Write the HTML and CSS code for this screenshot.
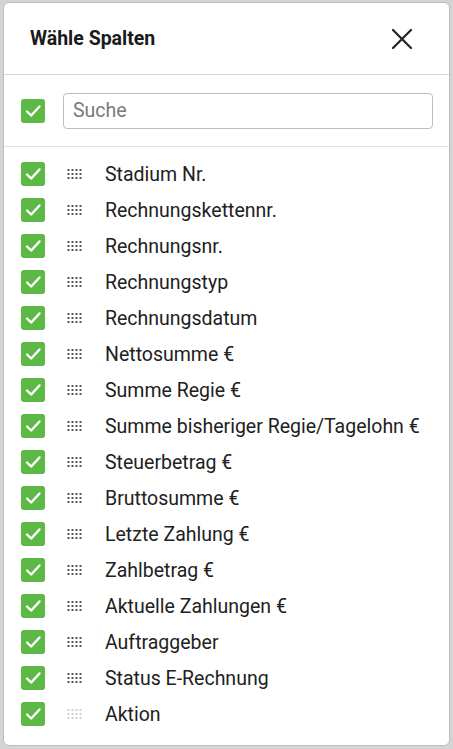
FILE: index.html
```html
<!DOCTYPE html>
<html lang="de">
<head>
<meta charset="utf-8">
<title>Wähle Spalten</title>
<link rel="stylesheet" href="styles.css">
</head>
<body>
<div class="modal">
  <div class="modal-header">
    <h2 class="modal-title">Wähle Spalten</h2>
    <button class="close-btn" aria-label="Schließen">
      <svg width="22" height="22" viewBox="0 0 22 22"><path d="M2 2 L20 20 M20 2 L2 20" stroke="#222" stroke-width="2.2" stroke-linecap="round" fill="none"/></svg>
    </button>
  </div>
  <div class="search-row">
    <span class="cb"><svg viewBox="0 0 24 24"><path d="M6 12.5 L10.2 16.5 L18.5 7.5" stroke="#fff" stroke-width="2.4" fill="none" stroke-linecap="round" stroke-linejoin="round"/></svg></span>
    <input class="search" type="text" placeholder="Suche">
  </div>
  <ul class="col-list">
    <li class="col-item"><span class="cb"><svg viewBox="0 0 24 24"><path d="M6 12.5 L10.2 16.5 L18.5 7.5" stroke="#fff" stroke-width="2.4" fill="none" stroke-linecap="round" stroke-linejoin="round"/></svg></span><span class="handle"></span><span class="label">Stadium Nr.</span></li>
    <li class="col-item"><span class="cb"><svg viewBox="0 0 24 24"><path d="M6 12.5 L10.2 16.5 L18.5 7.5" stroke="#fff" stroke-width="2.4" fill="none" stroke-linecap="round" stroke-linejoin="round"/></svg></span><span class="handle"></span><span class="label">Rechnungskettennr.</span></li>
    <li class="col-item"><span class="cb"><svg viewBox="0 0 24 24"><path d="M6 12.5 L10.2 16.5 L18.5 7.5" stroke="#fff" stroke-width="2.4" fill="none" stroke-linecap="round" stroke-linejoin="round"/></svg></span><span class="handle"></span><span class="label">Rechnungsnr.</span></li>
    <li class="col-item"><span class="cb"><svg viewBox="0 0 24 24"><path d="M6 12.5 L10.2 16.5 L18.5 7.5" stroke="#fff" stroke-width="2.4" fill="none" stroke-linecap="round" stroke-linejoin="round"/></svg></span><span class="handle"></span><span class="label">Rechnungstyp</span></li>
    <li class="col-item"><span class="cb"><svg viewBox="0 0 24 24"><path d="M6 12.5 L10.2 16.5 L18.5 7.5" stroke="#fff" stroke-width="2.4" fill="none" stroke-linecap="round" stroke-linejoin="round"/></svg></span><span class="handle"></span><span class="label">Rechnungsdatum</span></li>
    <li class="col-item"><span class="cb"><svg viewBox="0 0 24 24"><path d="M6 12.5 L10.2 16.5 L18.5 7.5" stroke="#fff" stroke-width="2.4" fill="none" stroke-linecap="round" stroke-linejoin="round"/></svg></span><span class="handle"></span><span class="label">Nettosumme €</span></li>
    <li class="col-item"><span class="cb"><svg viewBox="0 0 24 24"><path d="M6 12.5 L10.2 16.5 L18.5 7.5" stroke="#fff" stroke-width="2.4" fill="none" stroke-linecap="round" stroke-linejoin="round"/></svg></span><span class="handle"></span><span class="label">Summe Regie €</span></li>
    <li class="col-item"><span class="cb"><svg viewBox="0 0 24 24"><path d="M6 12.5 L10.2 16.5 L18.5 7.5" stroke="#fff" stroke-width="2.4" fill="none" stroke-linecap="round" stroke-linejoin="round"/></svg></span><span class="handle"></span><span class="label">Summe bisheriger Regie/Tagelohn €</span></li>
    <li class="col-item"><span class="cb"><svg viewBox="0 0 24 24"><path d="M6 12.5 L10.2 16.5 L18.5 7.5" stroke="#fff" stroke-width="2.4" fill="none" stroke-linecap="round" stroke-linejoin="round"/></svg></span><span class="handle"></span><span class="label">Steuerbetrag €</span></li>
    <li class="col-item"><span class="cb"><svg viewBox="0 0 24 24"><path d="M6 12.5 L10.2 16.5 L18.5 7.5" stroke="#fff" stroke-width="2.4" fill="none" stroke-linecap="round" stroke-linejoin="round"/></svg></span><span class="handle"></span><span class="label">Bruttosumme €</span></li>
    <li class="col-item"><span class="cb"><svg viewBox="0 0 24 24"><path d="M6 12.5 L10.2 16.5 L18.5 7.5" stroke="#fff" stroke-width="2.4" fill="none" stroke-linecap="round" stroke-linejoin="round"/></svg></span><span class="handle"></span><span class="label">Letzte Zahlung €</span></li>
    <li class="col-item"><span class="cb"><svg viewBox="0 0 24 24"><path d="M6 12.5 L10.2 16.5 L18.5 7.5" stroke="#fff" stroke-width="2.4" fill="none" stroke-linecap="round" stroke-linejoin="round"/></svg></span><span class="handle"></span><span class="label">Zahlbetrag €</span></li>
    <li class="col-item"><span class="cb"><svg viewBox="0 0 24 24"><path d="M6 12.5 L10.2 16.5 L18.5 7.5" stroke="#fff" stroke-width="2.4" fill="none" stroke-linecap="round" stroke-linejoin="round"/></svg></span><span class="handle"></span><span class="label">Aktuelle Zahlungen €</span></li>
    <li class="col-item"><span class="cb"><svg viewBox="0 0 24 24"><path d="M6 12.5 L10.2 16.5 L18.5 7.5" stroke="#fff" stroke-width="2.4" fill="none" stroke-linecap="round" stroke-linejoin="round"/></svg></span><span class="handle"></span><span class="label">Auftraggeber</span></li>
    <li class="col-item"><span class="cb"><svg viewBox="0 0 24 24"><path d="M6 12.5 L10.2 16.5 L18.5 7.5" stroke="#fff" stroke-width="2.4" fill="none" stroke-linecap="round" stroke-linejoin="round"/></svg></span><span class="handle"></span><span class="label">Status E-Rechnung</span></li>
    <li class="col-item"><span class="cb"><svg viewBox="0 0 24 24"><path d="M6 12.5 L10.2 16.5 L18.5 7.5" stroke="#fff" stroke-width="2.4" fill="none" stroke-linecap="round" stroke-linejoin="round"/></svg></span><span class="handle disabled"></span><span class="label">Aktion</span></li>
  </ul>
</div>
</body>
</html>
```
FILE: styles.css
```css
* { box-sizing: border-box; }
html, body { margin: 0; padding: 0; }
body {
  background: #d4d4d4;
  width: 453px;
  height: 749px;
  overflow: hidden;
  padding: 2px 3px 3px 3px;
  font-family: Roboto, "Liberation Sans", Arial, sans-serif;
  color: #212121;
}
.modal {
  background: #fff;
  border: 1px solid #bdbdbd;
  border-radius: 6px;
  height: 744px;
  display: flex;
  flex-direction: column;
}
.modal-header {
  height: 72px;
  display: flex;
  align-items: center;
  justify-content: space-between;
  padding: 0 36px 0 26px;
  border-bottom: 1px solid #d6d6d6;
}
.modal-title {
  margin: 0;
  font-size: 19.5px;
  font-weight: 700;
  color: #1a1a1a;
  letter-spacing: 0;
}
.close-btn {
  background: none;
  border: 0;
  padding: 0;
  width: 22px;
  height: 22px;
  display: flex;
}
.search-row {
  height: 72px;
  display: flex;
  align-items: center;
  padding: 0 16px 0 17px;
  border-bottom: 1px solid #e2e2e2;
  gap: 18px;
}
.cb {
  width: 24px;
  height: 24px;
  border-radius: 3px;
  background: #5cb946;
  display: flex;
  flex: none;
}
.cb svg { width: 24px; height: 24px; }
.search {
  flex: 1;
  height: 36px;
  border: 1px solid #bdbdbd;
  border-radius: 4px;
  padding: 0 9px;
  font-family: inherit;
  font-size: 19.5px;
  color: #212121;
  outline: none;
}
.search::placeholder { color: #7a7a7a; }
.col-list {
  list-style: none;
  margin: 0;
  padding: 9px 0 0 17px;
}
.col-item {
  height: 36px;
  display: flex;
  align-items: center;
}
.handle {
  width: 15px;
  height: 10px;
  margin: 0 23px 0 22px;
  background-image: radial-gradient(circle, #555 0.9px, transparent 1.1px);
  background-size: 4px 4px;
  background-position: -0.5px -1px;
  flex: none;
}
.handle.disabled {
  background-image: radial-gradient(circle, #d0d0d0 0.9px, transparent 1.1px);
}
.label {
  font-size: 19.5px;
  color: #212121;
  white-space: nowrap;
}
```
